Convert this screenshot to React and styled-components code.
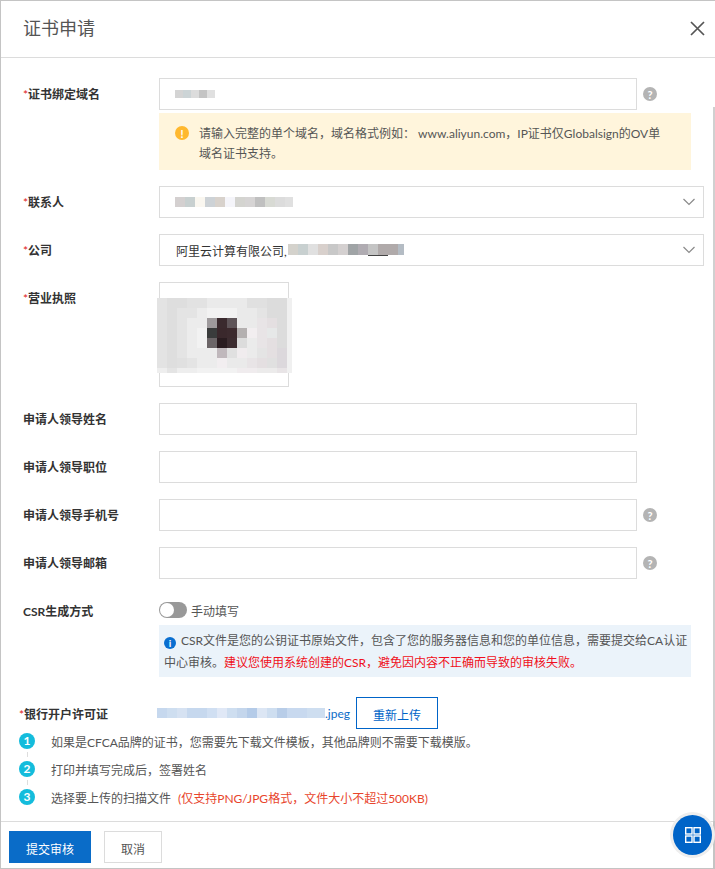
import React from 'react';
import styled, { createGlobalStyle } from 'styled-components';

const Global = createGlobalStyle`
  html, body { margin: 0; padding: 0; background: #fff; }
  * { box-sizing: border-box; }
  body { font-family: Lato, "Noto Sans CJK SC", sans-serif; font-size: 12px; color: #555; }
`;

const Frame = styled.div`
  position: relative; width: 715px; height: 869px; display: flex; flex-direction: column;
  border-top: 1px solid #c4c4c4; border-left: 1px solid #c4c4c4; border-bottom: 1px solid #c4c4c4;
  background: #fff; overflow: hidden;
`;
const Header = styled.header`
  height: 57px; flex: none; display: flex; align-items: center; justify-content: space-between;
  padding: 0 10px 2px 22px; border-bottom: 1px solid #dcdcdc;
`;
const Title = styled.h1`margin: 0; font-size: 18px; font-weight: 400; color: #555; line-height: 24px;`;
const Close = styled.button`border: 0; background: none; padding: 0; width: 15px; height: 15px; display: flex;`;
const Body = styled.main`flex: 1; padding: 20px 0 0 22px; min-height: 0;`;
const Row = styled.div`display: flex; align-items: flex-start; margin-bottom: ${p => p.$mb ?? 16}px;`;
const Label = styled.label`
  flex: none; width: 136px; font-weight: 700; color: #333; font-size: 12px; padding-top: 1px;
  height: ${p => p.$lh ?? 32}px; line-height: ${p => p.$lh ?? 32}px; white-space: nowrap;
`;
const Star = styled.span`color: #e02020; font-weight: 400;`;
const Field = styled.div`flex: none; width: 545px;`;
const InputLine = styled.div`display: flex; align-items: center; gap: 6px;`;
const Input = styled.div`
  width: 478px; height: 32px; border: 1px solid #dcdcdc; background: #fff; display: flex; align-items: center; padding-left: 15px;
`;
const Help = styled.span`
  width: 14px; height: 14px; border-radius: 50%; background: #b4b4b4; color: #fff; font-size: 11px; font-weight: 700;
  display: flex; align-items: center; justify-content: center; line-height: 1;
`;
const Warning = styled.div`
  width: 532px; height: 57px; margin-top: 3px; background: #fff5dc; display: flex; padding: 11px 12px 0 16px; color: #555; line-height: 20px;
`;
const WarnIcon = styled.span`
  flex: none; width: 14px; height: 14px; margin-top: 2px; margin-right: 10px; border-radius: 50%; background: #ffb82e; color: #fff;
  font-weight: 700; font-size: 11px; display: flex; align-items: center; justify-content: center; line-height: 1;
`;
const Nowrap = styled.div`white-space: nowrap;`;
const Select = styled.div`
  width: 545px; height: 32px; border: 1px solid #dcdcdc; display: flex; align-items: center; justify-content: space-between;
  padding: 0 7px 0 ${p => p.$pl ?? 16}px; color: #333;
`;
const SelectValue = styled.span`display: flex; align-items: center; gap: 1px;`;
const Upload = styled.div`position: relative; width: 130px; height: 105px; border: 1px solid #dcdcdc;`;
const UploadImage = styled.div`position: absolute; left: -3px; top: 15px; display: flex;`;
const Switch = styled.span`
  display: inline-flex; align-items: center; width: 28px; height: 16px; border-radius: 8px; background: #999; padding: 1px;
`;
const Knob = styled.span`width: 14px; height: 14px; border-radius: 50%; background: #fff;`;
const SwitchRow = styled.div`display: flex; align-items: center; gap: 4px; height: 16px; color: #555;`;
const Info = styled.div`
  width: 532px; height: 52px; margin-top: 7px; background: #ebf3fa; padding: 5px 5px 3px; line-height: 22px; color: #555; white-space: nowrap;
`;
const InfoIcon = styled.span`
  display: inline-flex; width: 12px; height: 12px; margin: 0 5px 0 0; border-radius: 50%; background: #0a6fd0; color: #fff;
  font-size: 10px; font-weight: 700; align-items: center; justify-content: center; line-height: 1; vertical-align: -2px;
`;
const Red = styled.span`color: #f01020;`;
const BankRow = styled.div`display: flex; align-items: center; margin: 20px 0 0 -4px; height: 32px;`;
const BankLabel = styled.label`flex: none; width: 138px; font-weight: 700; color: #333; white-space: nowrap;`;
const FileName = styled.span`display: flex; align-items: center; color: #0a6cc8; width: 199px; height: 32px;`;
const Reupload = styled.button`
  width: 82px; height: 32px; border: 1px solid #0064c8; background: #fff; color: #0064c8; font: inherit; padding: 2px 0 0;
`;
const Steps = styled.ol`list-style: none; margin: -2px 0 0 -4px; padding: 0;`;
const Step = styled.li`position: relative; display: flex; align-items: center; height: 28px; color: #555;`;
const Dot = styled.span`
  flex: none; width: 16px; height: 16px; margin-right: 16px; border-radius: 50%; background: #14bcdc; color: #fff; font-size: 12px;
  font-weight: 700; display: flex; align-items: center; justify-content: center; line-height: 1;
`;
const Connector = styled.span`position: absolute; left: 8px; top: 25px; height: 5px; width: 1px; background: #ddd;`;
const Note = styled.span`color: #e8452c; margin-left: 7px;`;
const Footer = styled.footer`
  height: 47px; flex: none; display: flex; align-items: flex-start; gap: 13px; padding: 9px 0 0 8px; border-top: 1px solid #dcdcdc;
`;
const Primary = styled.button`
  width: 82px; height: 32px; border: 0; background: #0a6cc8; color: #fff; font: inherit; padding: 2px 0 0;
`;
const Cancel = styled.button`
  width: 58px; height: 32px; border: 1px solid #dcdcdc; background: #fff; color: #555; font: inherit; padding: 2px 0 0;
`;
const Fab = styled.div`
  position: absolute; left: 672px; top: 814px; width: 39px; height: 40px; border-radius: 50%; background: #0064c8;
  box-shadow: 0 0 0 3px #eee; display: flex; align-items: center; justify-content: center;
`;
const ScrollThumb = styled.div`position: absolute; right: 0; top: 106px; width: 2px; height: 714px; background: #d0d0d0;`;
const ScrollEdge = styled.div`position: absolute; right: 0; top: 820px; width: 2px; bottom: 0; background: #c4c4c4;`;

const Mosaic = ({ rows, w = 10, h = 10, widths, heights }) => {
  const cols = rows[0].length;
  const cw = i => (widths && widths[i]) || w;
  const rh = i => (heights && heights[i]) || h;
  const tw = Array.from({ length: cols }, (_, i) => cw(i)).reduce((a, b) => a + b, 0);
  const th = rows.map((_, i) => rh(i)).reduce((a, b) => a + b, 0);
  let y = 0;
  return (
    <svg width={tw} height={th} viewBox={`0 0 ${tw} ${th}`} shapeRendering="crispEdges" style={{ display: 'block' }}>
      {rows.map((r, ri) => {
        let x = 0;
        const els = r.map((c, ci) => {
          const el = <rect key={ci} x={x} y={y} width={cw(ci)} height={rh(ri)} fill={c} />;
          x += cw(ci);
          return el;
        });
        y += rh(ri);
        return <g key={ri}>{els}</g>;
      })}
    </svg>
  );
};

const Chevron = () => (
  <svg width="14" height="8" viewBox="0 0 14 8" fill="none"><polyline points="1.5,1 7,6.5 12.5,1" stroke="#8a8a8a" strokeWidth="1.2" /></svg>
);
const X = () => (
  <svg width="15" height="15" viewBox="0 0 15 15" fill="none"><path d="M1 1 L14 14 M14 1 L1 14" stroke="#555" strokeWidth="1.7" /></svg>
);
const Grid = () => (
  <svg width="18" height="18" viewBox="0 0 18 18" fill="none" stroke="#fff" strokeWidth="1.4">
    <rect x="1.7" y="1.7" width="6.3" height="6.3" /><rect x="10" y="1.7" width="6.3" height="6.3" />
    <rect x="1.7" y="10" width="6.3" height="6.3" /><rect x="10" y="10" width="6.3" height="6.3" />
  </svg>
);

const photo = [
  ['#e3e3e3','#dedede','#dedede','#e2e2e2','#e2e2e2','#eaeaea','#eaeaea','#eaeaea','#eaeaea','#e0e0e0','#e0e0e0','#dcdcdc','#dcdcdc','#f0f0f0'],
  ['#e3e3e3','#dedede','#e4e4e4','#e4e4e4','#ececec','#f2f2f2','#f2f2f2','#f2f2f2','#eaeaea','#eaeaea','#e4e4e4','#dcdcdc','#dcdcdc','#f0f0f0'],
  ['#e3e3e3','#dedede','#e4e4e4','#ececec','#ececec','#9e9a9c','#3a2a2e','#5e5458','#eaeaea','#eaeaea','#e8e4e6','#e4dfe1','#dcdcdc','#f0f0f0'],
  ['#e3e3e3','#dedede','#e4e4e4','#ececec','#f2f2f2','#3a3c3c','#3a282c','#3c2a2e','#b4b0b0','#f2eef0','#e8e4e6','#e6e8e8','#dcdcdc','#f0f0f0'],
  ['#e3e3e3','#dedede','#e4e4e4','#ececec','#f2f2f2','#6c6668','#2a1c20','#3c2c30','#dcdcdc','#ebebeb','#e8e4e6','#e4dfe1','#dcdcdc','#f0f0f0'],
  ['#e3e3e3','#dedede','#e4e4e4','#ececec','#ececec','#ececec','#c0b8bc','#e0e0e0','#f0ecee','#ebebeb','#e4e4e4','#e4dfe1','#dcd8dc','#f0f0f0'],
  ['#e3e3e3','#dedede','#e0e0e0','#e4e4e4','#ececec','#ececec','#f2eef0','#eaeaea','#eaeaea','#e8e4e6','#e4dfe1','#e0e0e0','#dcd8dc','#f0f0f0'],
  ['#eeeeee','#e4e4e4','#eeeeee','#eeeeee','#f2f2f2','#f2f2f2','#f2f2f2','#f2f2f2','#f0ecee','#f0ecee','#ecebeb','#ecebeb','#e8e4e6','#f0f0f0'],
];
const domainBlur = [['#d4d4d4','#ccd4d6','#dcdcdc','#c4c4c4','#e0e0e0']];
const contactBlur = [['#d4d0d0','#c8d0d0','#faf7f0','#cdd2d6','#d8d2cc','#f5f5fa','#d4d4d0','#d6d4d4','#c0c0c0','#d8dad4','#dcdcdc','#e0e0e0']];
const companyBlur = [
  ['#d4d2cc','#c8d0d0','#e0e0e0','#d8d0cc','#c8c8c8','#d4d0d0','#a0a4a6','#b0acb2','#c4c4c4','#b0aaaa','#b0aaaa','#b4bcc4'],
  ['#fff','#fff','#fff','#fff','#fff','#fff','#fff','#fff','#444','#444','#fff','#fff'],
];
const fileBlur = [['#c6d8ee','#cedef0','#d6e2f2','#c6d8ee','#c6d8ee','#d0dff2','#e0e8f6','#cedef0','#c4d6ec','#b4cbe8','#dce6f4','#cedef0','#b8cde8','#c8d9ef','#c8d9ef','#cedef0','#cedef0']];

const Required = ({ children }) => <Label><Star>*</Star>{children}</Label>;

export default function App() {
  return (
    <Frame>
      <Global />
      <Header><Title>证书申请</Title><Close aria-label="关闭"><X /></Close></Header>
      <Body>
        <Row $mb={16}>
          <Required>证书绑定域名</Required>
          <Field>
            <InputLine>
              <Input><Mosaic rows={domainBlur} w={8} h={8} /></Input>
              <Help>?</Help>
            </InputLine>
            <Warning>
              <WarnIcon>!</WarnIcon>
              <Nowrap>请输入完整的单个域名，域名格式例如： www.aliyun.com，IP证书仅Globalsign的OV单<br />域名证书支持。</Nowrap>
            </Warning>
          </Field>
        </Row>
        <Row>
          <Required>联系人</Required>
          <Field><Select $pl={15}><SelectValue><Mosaic rows={contactBlur} widths={{ 11: 8 }} /></SelectValue><Chevron /></Select></Field>
        </Row>
        <Row>
          <Required>公司</Required>
          <Field><Select><SelectValue>阿里云计算有限公司,<Mosaic rows={companyBlur} widths={{ 11: 6 }} heights={{ 0: 11, 1: 1 }} /></SelectValue><Chevron /></Select></Field>
        </Row>
        <Row>
          <Required>营业执照</Required>
          <Field><Upload><UploadImage><Mosaic rows={photo} widths={{ 13: 5 }} heights={{ 7: 5 }} /></UploadImage></Upload></Field>
        </Row>
        <Row><Label>申请人领导姓名</Label><Field><Input /></Field></Row>
        <Row><Label>申请人领导职位</Label><Field><Input /></Field></Row>
        <Row><Label>申请人领导手机号</Label><Field><InputLine><Input /><Help>?</Help></InputLine></Field></Row>
        <Row $mb={23}><Label>申请人领导邮箱</Label><Field><InputLine><Input /><Help>?</Help></InputLine></Field></Row>
        <Row $mb={0}>
          <Label $lh={18}>CSR生成方式</Label>
          <Field>
            <SwitchRow><Switch><Knob /></Switch>手动填写</SwitchRow>
            <Info>
              <InfoIcon>i</InfoIcon>CSR文件是您的公钥证书原始文件，包含了您的服务器信息和您的单位信息，需要提交给CA认证<br />
              中心审核。<Red>建议您使用系统创建的CSR，避免因内容不正确而导致的审核失败。</Red>
            </Info>
          </Field>
        </Row>
        <BankRow>
          <BankLabel><Star>*</Star>银行开户许可证</BankLabel>
          <FileName><Mosaic rows={fileBlur} w={10} h={10} widths={{ 16: 8 }} />.jpeg</FileName>
          <Reupload>重新上传</Reupload>
        </BankRow>
        <Steps>
          <Step><Dot>1</Dot>如果是CFCA品牌的证书，您需要先下载文件模板，其他品牌则不需要下载模版。<Connector /></Step>
          <Step><Dot>2</Dot>打印并填写完成后，签署姓名<Connector /></Step>
          <Step><Dot>3</Dot>选择要上传的扫描文件<Note>(仅支持PNG/JPG格式，文件大小不超过500KB)</Note></Step>
        </Steps>
      </Body>
      <Footer><Primary>提交审核</Primary><Cancel>取消</Cancel></Footer>
      <ScrollThumb /><ScrollEdge />
      <Fab><Grid /></Fab>
    </Frame>
  );
}
